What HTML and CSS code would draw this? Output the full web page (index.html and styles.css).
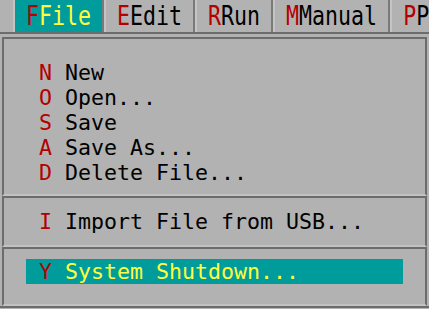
FILE: index.html
```html
<!DOCTYPE html>
<html>
<head>
<meta charset="utf-8">
<link rel="stylesheet" href="styles.css">
</head>
<body>
<div class="menubar">
  <div class="tab active"><span class="tab-text"><span class="hk">F</span>File</span></div>
  <div class="tab"><span class="tab-text"><span class="hk">E</span>Edit</span></div>
  <div class="tab"><span class="tab-text"><span class="hk">R</span>Run</span></div>
  <div class="tab"><span class="tab-text"><span class="hk">M</span>Manual</span></div>
  <div class="tab last"><span class="tab-text"><span class="hk">P</span>P</span></div>
</div>
<div class="dropdown">
  <div class="section first">
    <div class="item"><span class="hk">N</span> New</div>
    <div class="item"><span class="hk">O</span> Open...</div>
    <div class="item"><span class="hk">S</span> Save</div>
    <div class="item"><span class="hk">A</span> Save As...</div>
    <div class="item"><span class="hk">D</span> Delete File...</div>
  </div>
  <div class="section second">
    <div class="item"><span class="hk">I</span> Import File from USB...</div>
  </div>
  <div class="section third">
    <div class="item selected"><span class="hk">Y</span> System Shutdown...</div>
  </div>
</div>
</body>
</html>
```
FILE: styles.css
```css
html, body {
  margin: 0;
  padding: 0;
  background: #b2b2b2;
  width: 429px;
  height: 309px;
  overflow: hidden;
}
body {
  font-family: "DejaVu Sans Mono", "Liberation Mono", monospace;
  font-size: 21.6px;
  color: #000;
}
.menubar {
  display: flex;
  height: 32px;
  padding-left: 13px;
  border-bottom: 2px solid #6c6c6c;
  overflow: hidden;
  white-space: nowrap;
}
.tab {
  flex: none;
  height: 32px;
  padding: 0 11px;
  border-left: 2px solid #c4c4c4;
  border-right: 2px solid #7a7a7a;
  line-height: 32px;
}
.tab.last {
  padding-right: 0;
  border-right: 0;
}
.tab.active {
  background: #009c9c;
  background-clip: padding-box;
  color: #ffff40;
}
.tab-text {
  display: inline-block;
  height: 32px;
  transform: translateY(1px) scaleY(1.2);
  transform-origin: 50% 50%;
}
.hk {
  color: #b40000;
}
.dropdown {
  margin-top: 3px;
  border-bottom: 2px solid #6c6c6c;
  height: 269px;
}
.section {
  margin: 0 2px;
  border: 2px solid #6c6c6c;
  border-bottom-color: #c2c2c2;
}
.section.first {
  padding: 21px 0 9px;
}
.section.second {
  padding: 11px 0;
}
.section.third {
  padding: 10px 0 20px;
}
.item {
  margin-left: 22px;
  width: 364px;
  padding-left: 13px;
  height: 25px;
  line-height: 25px;
  white-space: pre;
}
.item.selected {
  background: #009c9c;
  color: #ffff40;
}
```
